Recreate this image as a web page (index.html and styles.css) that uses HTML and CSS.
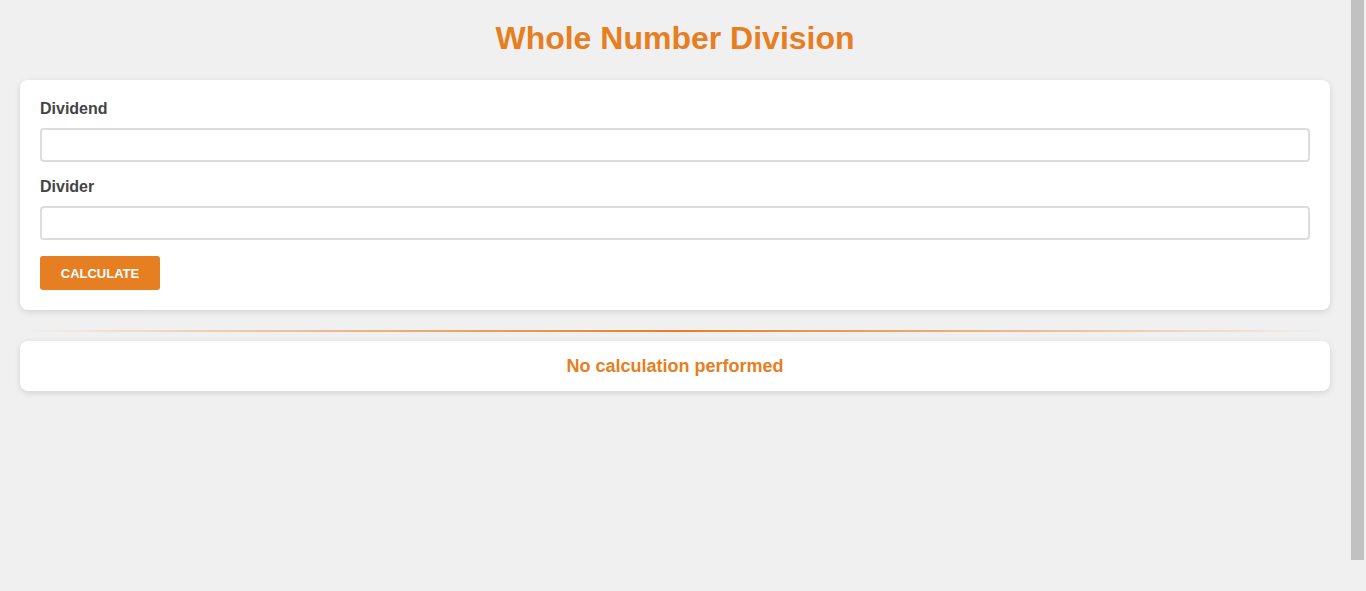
FILE: index.html
```html
<!DOCTYPE html>
<html lang="en">
<head>
<meta charset="utf-8">
<title>Whole Number Division</title>
<link rel="stylesheet" href="styles.css">
</head>
<body>
<div class="window">
  <main class="page">
    <h1 class="title">Whole Number Division</h1>
    <div class="card form-card">
      <div class="field">
        <label class="label" for="dividend">Dividend</label>
        <input class="input" id="dividend" type="text">
      </div>
      <div class="field">
        <label class="label" for="divider">Divider</label>
        <input class="input" id="divider" type="text">
      </div>
      <button class="btn" type="button">Calculate</button>
    </div>
    <div class="separator"></div>
    <div class="card result-card">
      <p class="result">No calculation performed</p>
    </div>
  </main>
  <div class="rail" aria-hidden="true"><div class="thumb"></div></div>
</div>
</body>
</html>
```
FILE: styles.css
```css
html {
  background: #f0f0f0;
}
body {
  margin: 0;
  background: #f0f0f0;
  font-family: "Liberation Sans", Arial, sans-serif;
  color: #444;
  overflow: hidden;
}
.window {
  display: flex;
  height: 100vh;
}
.page {
  flex: 1;
  min-width: 0;
  padding: 16px 20px;
}
.rail {
  width: 13px;
  flex: none;
  padding: 0 2px 0 1px;
  background: #f0f0f0;
}
.thumb {
  height: 560px;
  background: #c1c1c1;
}
.title {
  margin: 0 0 20px;
  text-align: center;
  color: #e67e22;
  font-size: 32px;
  line-height: 44px;
  font-weight: bold;
}
.card {
  background: #fff;
  border-radius: 8px;
  box-shadow: 0 2px 6px rgba(0, 0, 0, 0.12);
}
.form-card {
  padding: 20px;
}
.field {
  display: flex;
  flex-direction: column;
  margin-bottom: 16px;
}
.label {
  font-size: 16px;
  line-height: 18px;
  font-weight: bold;
  color: #444;
  margin-bottom: 10px;
}
.input {
  box-sizing: border-box;
  height: 34px;
  margin: 0;
  border: 2px solid #ddd;
  border-radius: 4px;
  padding: 6px 10px;
  font-size: 14px;
  font-family: inherit;
  outline: none;
}
.btn {
  display: block;
  width: 120px;
  height: 34px;
  border: none;
  border-radius: 3px;
  background: #e67e22;
  color: #fff;
  font-family: inherit;
  font-size: 13px;
  font-weight: bold;
  text-transform: uppercase;
  padding: 0;
}
.separator {
  height: 2px;
  margin: 20px 0 9px;
  background: linear-gradient(to right, rgba(230, 126, 34, 0), #e67e22 50%, rgba(230, 126, 34, 0));
}
.result-card {
  padding: 15px 20px;
}
.result {
  margin: 0;
  text-align: center;
  color: #e67e22;
  font-size: 18px;
  line-height: 20px;
  font-weight: bold;
}
```
